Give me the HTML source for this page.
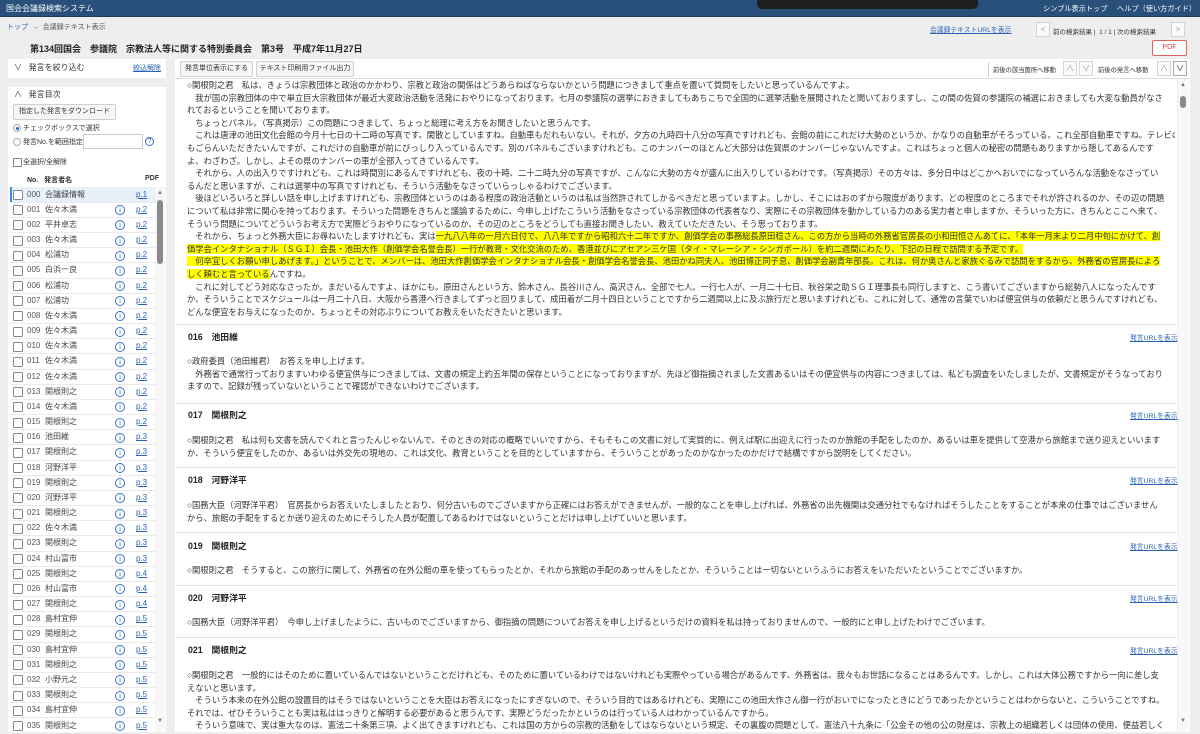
<!DOCTYPE html>
<html><head><meta charset="utf-8">
<style>
*{margin:0;padding:0;box-sizing:border-box}
body{width:1200px;height:732px;overflow:hidden;background:#eeeeee;font-family:"Liberation Sans","Noto Sans CJK JP",sans-serif;color:#333;position:relative}
.a{position:absolute}
.hdr{left:0;top:0;width:1200px;height:17px;background:#28507a;border-bottom:1px solid #1b3a5c}
.w{color:#fff;font-size:8.5px;line-height:17px}
.lnk{color:#2a62b8;text-decoration:underline}
.btn{background:#f6f6f6;border:1px solid #cfcfcf;border-radius:2px;font-size:7px;line-height:14px;text-align:center;color:#333;white-space:nowrap;overflow:hidden}
.ln{position:absolute;left:187px;width:988px;white-space:nowrap;overflow:hidden;font-size:8.3px;line-height:12.6px;height:12.6px}
.hl{background:#ffff00}
.sep{position:absolute;left:176px;width:1000px;height:1px;background:#e2e2e2}
.sh{position:absolute;left:188px;font-size:8.8px;font-weight:bold;color:#222}
.su{position:absolute;left:1130px;font-size:6.8px;color:#2a62b8;text-decoration:underline}
.row{position:absolute;left:10px;width:145px;height:15.17px;border-bottom:1px solid #eaeaea;font-size:8px;line-height:14px}
.cb{position:absolute;left:3px;top:2.5px;width:10px;height:10px;border:1px solid #888;border-radius:1.5px;background:#fff}
.no{position:absolute;left:17px;color:#555}
.nm{position:absolute;left:35px;color:#444}
.ic{position:absolute;left:105px;top:2.5px;width:10px;height:10px;border:1px solid #3a6fc0;border-radius:50%;color:#3a6fc0;font-size:7.5px;line-height:8px;text-align:center;font-family:"Liberation Serif",serif}
.pg{position:absolute;left:126px;color:#2a62b8;text-decoration:underline}
.arw{width:14px;height:15px;border:1px solid #d5d5d5;background:#fafafa;font-size:8px;line-height:13px;text-align:center;color:#999}
</style></head><body>
<div class="a hdr"></div>
<div class="a w" style="left:6px;top:0;font-size:8px">国会会議録検索システム</div>
<div class="a" style="left:757px;top:0;width:221px;height:9px;background:#1e1e1e;border-radius:0 0 5px 5px"></div>
<div class="a w" style="left:1043px;top:0;font-size:7.2px">シンプル表示トップ</div>
<div class="a w" style="left:1117px;top:0;font-size:7.2px">ヘルプ（使い方ガイド）</div>

<div class="a" style="left:7px;top:22px;font-size:7px;color:#555"><span style="color:#2a62b8">トップ</span> &nbsp;→&nbsp; 会議録テキスト表示</div>
<div class="a" style="left:30px;top:42px;font-size:9px;font-weight:bold;color:#222">第134回国会　参議院　宗教法人等に関する特別委員会　第3号　平成7年11月27日</div>
<div class="a lnk" style="left:930px;top:24px;font-size:6.8px">会議録テキストURLを表示</div>
<div class="a arw" style="left:1036px;top:22px">&lt;</div>
<div class="a" style="left:1053px;top:26px;font-size:6.5px;color:#333;white-space:nowrap">前の検索結果 |&nbsp; 1 / 1 | 次の検索結果</div>
<div class="a arw" style="left:1171px;top:22px">&gt;</div>
<div class="a" style="left:1152px;top:40px;width:35px;height:16px;border:1px solid #e06060;border-radius:2px;background:#fff;color:#d04040;font-size:7px;line-height:14px;text-align:center">PDF</div>

<!-- left panel -->
<div class="a" style="left:8px;top:59px;width:158px;height:19px;background:#fff"></div>
<div class="a" style="left:14px;top:62px;font-size:8px;color:#333">∨ &nbsp;&nbsp;発言を絞り込む</div>
<div class="a lnk" style="left:133px;top:63px;font-size:7px">絞込解除</div>
<div class="a" style="left:8px;top:87px;width:158px;height:645px;background:#fff"></div>
<div class="a" style="left:14px;top:89px;font-size:8px;color:#333">∧ &nbsp;&nbsp;発言目次</div>
<div class="a btn" style="left:13px;top:104px;width:103px;height:16px">指定した発言をダウンロード</div>
<div class="a" style="left:13px;top:124px;width:8px;height:8px;border:1px solid #aaa;border-radius:50%"><div style="margin:1.5px;width:3px;height:3px;border-radius:50%;background:#1a5fc4"></div></div>
<div class="a" style="left:23px;top:123px;font-size:7px">チェックボックスで選択</div>
<div class="a" style="left:13px;top:138px;width:8px;height:8px;border:1px solid #aaa;border-radius:50%"></div>
<div class="a" style="left:23px;top:137px;font-size:7px">発言No.を範囲指定</div>
<div class="a" style="left:83px;top:134px;width:60px;height:15px;border:1px solid #ccc"></div>
<div class="a" style="left:145px;top:137px;width:9px;height:9px;border:1px solid #3a6fc0;border-radius:50%;color:#3a6fc0;font-size:7px;line-height:7px;text-align:center">?</div>
<div class="a" style="left:13px;top:158px;width:9px;height:9px;border:1px solid #888"></div>
<div class="a" style="left:23px;top:157px;font-size:7px">全選択/全解除</div>
<div class="a" style="left:27px;top:175px;font-size:7px;font-weight:bold;color:#333">No.&nbsp;&nbsp; 発言者名</div>
<div class="a" style="left:145px;top:175px;font-size:7px;font-weight:bold;color:#333">PDF</div>
<div class="a" style="left:10px;top:187px;width:145px;height:15px;background:#e8f1fa;border-left:2px solid #3a8ee0"></div>

<div class="row" style="top:187.5px"><div class="cb"></div><div class="no">000</div><div class="nm">会議録情報</div><div class="pg">p.1</div></div>
<div class="row" style="top:202.7px"><div class="cb"></div><div class="no">001</div><div class="nm">佐々木満</div><div class="ic">i</div><div class="pg">p.2</div></div>
<div class="row" style="top:217.8px"><div class="cb"></div><div class="no">002</div><div class="nm">平井卓志</div><div class="ic">i</div><div class="pg">p.2</div></div>
<div class="row" style="top:233.0px"><div class="cb"></div><div class="no">003</div><div class="nm">佐々木満</div><div class="ic">i</div><div class="pg">p.2</div></div>
<div class="row" style="top:248.2px"><div class="cb"></div><div class="no">004</div><div class="nm">松浦功</div><div class="ic">i</div><div class="pg">p.2</div></div>
<div class="row" style="top:263.4px"><div class="cb"></div><div class="no">005</div><div class="nm">白浜一良</div><div class="ic">i</div><div class="pg">p.2</div></div>
<div class="row" style="top:278.5px"><div class="cb"></div><div class="no">006</div><div class="nm">松浦功</div><div class="ic">i</div><div class="pg">p.2</div></div>
<div class="row" style="top:293.7px"><div class="cb"></div><div class="no">007</div><div class="nm">松浦功</div><div class="ic">i</div><div class="pg">p.2</div></div>
<div class="row" style="top:308.9px"><div class="cb"></div><div class="no">008</div><div class="nm">佐々木満</div><div class="ic">i</div><div class="pg">p.2</div></div>
<div class="row" style="top:324.0px"><div class="cb"></div><div class="no">009</div><div class="nm">佐々木満</div><div class="ic">i</div><div class="pg">p.2</div></div>
<div class="row" style="top:339.2px"><div class="cb"></div><div class="no">010</div><div class="nm">佐々木満</div><div class="ic">i</div><div class="pg">p.2</div></div>
<div class="row" style="top:354.4px"><div class="cb"></div><div class="no">011</div><div class="nm">佐々木満</div><div class="ic">i</div><div class="pg">p.2</div></div>
<div class="row" style="top:369.5px"><div class="cb"></div><div class="no">012</div><div class="nm">佐々木満</div><div class="ic">i</div><div class="pg">p.2</div></div>
<div class="row" style="top:384.7px"><div class="cb"></div><div class="no">013</div><div class="nm">関根則之</div><div class="ic">i</div><div class="pg">p.2</div></div>
<div class="row" style="top:399.9px"><div class="cb"></div><div class="no">014</div><div class="nm">佐々木満</div><div class="ic">i</div><div class="pg">p.2</div></div>
<div class="row" style="top:415.1px"><div class="cb"></div><div class="no">015</div><div class="nm">関根則之</div><div class="ic">i</div><div class="pg">p.2</div></div>
<div class="row" style="top:430.2px"><div class="cb"></div><div class="no">016</div><div class="nm">池田維</div><div class="ic">i</div><div class="pg">p.3</div></div>
<div class="row" style="top:445.4px"><div class="cb"></div><div class="no">017</div><div class="nm">関根則之</div><div class="ic">i</div><div class="pg">p.3</div></div>
<div class="row" style="top:460.6px"><div class="cb"></div><div class="no">018</div><div class="nm">河野洋平</div><div class="ic">i</div><div class="pg">p.3</div></div>
<div class="row" style="top:475.7px"><div class="cb"></div><div class="no">019</div><div class="nm">関根則之</div><div class="ic">i</div><div class="pg">p.3</div></div>
<div class="row" style="top:490.9px"><div class="cb"></div><div class="no">020</div><div class="nm">河野洋平</div><div class="ic">i</div><div class="pg">p.3</div></div>
<div class="row" style="top:506.1px"><div class="cb"></div><div class="no">021</div><div class="nm">関根則之</div><div class="ic">i</div><div class="pg">p.3</div></div>
<div class="row" style="top:521.2px"><div class="cb"></div><div class="no">022</div><div class="nm">佐々木満</div><div class="ic">i</div><div class="pg">p.3</div></div>
<div class="row" style="top:536.4px"><div class="cb"></div><div class="no">023</div><div class="nm">関根則之</div><div class="ic">i</div><div class="pg">p.3</div></div>
<div class="row" style="top:551.6px"><div class="cb"></div><div class="no">024</div><div class="nm">村山富市</div><div class="ic">i</div><div class="pg">p.3</div></div>
<div class="row" style="top:566.8px"><div class="cb"></div><div class="no">025</div><div class="nm">関根則之</div><div class="ic">i</div><div class="pg">p.4</div></div>
<div class="row" style="top:581.9px"><div class="cb"></div><div class="no">026</div><div class="nm">村山富市</div><div class="ic">i</div><div class="pg">p.4</div></div>
<div class="row" style="top:597.1px"><div class="cb"></div><div class="no">027</div><div class="nm">関根則之</div><div class="ic">i</div><div class="pg">p.4</div></div>
<div class="row" style="top:612.3px"><div class="cb"></div><div class="no">028</div><div class="nm">島村宜伸</div><div class="ic">i</div><div class="pg">p.5</div></div>
<div class="row" style="top:627.4px"><div class="cb"></div><div class="no">029</div><div class="nm">関根則之</div><div class="ic">i</div><div class="pg">p.5</div></div>
<div class="row" style="top:642.6px"><div class="cb"></div><div class="no">030</div><div class="nm">島村宜伸</div><div class="ic">i</div><div class="pg">p.5</div></div>
<div class="row" style="top:657.8px"><div class="cb"></div><div class="no">031</div><div class="nm">関根則之</div><div class="ic">i</div><div class="pg">p.5</div></div>
<div class="row" style="top:672.9px"><div class="cb"></div><div class="no">032</div><div class="nm">小野元之</div><div class="ic">i</div><div class="pg">p.5</div></div>
<div class="row" style="top:688.1px"><div class="cb"></div><div class="no">033</div><div class="nm">関根則之</div><div class="ic">i</div><div class="pg">p.5</div></div>
<div class="row" style="top:703.3px"><div class="cb"></div><div class="no">034</div><div class="nm">島村宜伸</div><div class="ic">i</div><div class="pg">p.5</div></div>
<div class="row" style="top:718.5px"><div class="cb"></div><div class="no">035</div><div class="nm">関根則之</div><div class="ic">i</div><div class="pg">p.5</div></div>
<div class="a" style="left:155px;top:187px;width:10px;height:545px;background:#f7f7f7"></div>
<div class="a" style="left:157px;top:190px;font-size:6px;color:#777">▲</div>
<div class="a" style="left:157px;top:200px;width:6px;height:64px;background:#8a8a8a;border-radius:3px"></div>
<div class="a" style="left:157px;top:718px;font-size:6px;color:#777">▼</div>

<!-- main panel -->
<div class="a" style="left:175px;top:59px;width:1015px;height:673px;background:#fff"></div>
<div class="a" style="left:175px;top:78px;width:1015px;height:1px;background:#ddd"></div>
<div class="a btn" style="left:180px;top:61px;width:73px;height:16px">発言単位表示にする</div>
<div class="a btn" style="left:256px;top:61px;width:98px;height:16px">テキスト印刷用ファイル出力</div>
<div class="a" style="left:988px;top:62px;width:1px;height:15px;background:#ccc"></div>
<div class="a" style="left:993px;top:65px;font-size:6.3px;white-space:nowrap">前後の該当箇所へ移動</div>
<div class="a arw" style="left:1063px;top:61px">∧</div>
<div class="a arw" style="left:1079px;top:61px">∨</div>
<div class="a" style="left:1098px;top:65px;font-size:6.3px;white-space:nowrap">前後の発言へ移動</div>
<div class="a arw" style="left:1157px;top:61px">∧</div>
<div class="a arw" style="left:1173px;top:61px;color:#333;border-color:#aaa">∨</div>
<div class="a" style="left:1177px;top:79px;width:12px;height:653px;background:#f8f8f8;border-left:1px solid #eee"></div>
<div class="a" style="left:1180px;top:82px;font-size:6px;color:#777">▲</div>
<div class="a" style="left:1180px;top:96px;width:6px;height:12px;background:#8a8a8a;border-radius:3px"></div>
<div class="a" style="left:1180px;top:718px;font-size:6px;color:#777">▼</div>

<div class="ln" style="top:79px">○関根則之君　私は、きょうは宗教団体と政治のかかわり、宗教と政治の関係はどうあらねばならないかという問題につきまして重点を置いて質問をしたいと思っているんですよ。</div>
<div class="ln" style="top:91.6px">　我が国の宗教団体の中で単立巨大宗教団体が最近大変政治活動を活発におやりになっております。七月の参議院の選挙におきましてもあちこちで全国的に選挙活動を展開されたと聞いておりますし、この間の佐賀の参議院の補選におきましても大変な動員がなさ</div>
<div class="ln" style="top:104.2px">れておるということを聞いております。</div>
<div class="ln" style="top:116.8px">　ちょっとパネル。（写真掲示）この問題につきまして、ちょっと総理に考え方をお聞きしたいと思うんです。</div>
<div class="ln" style="top:129.4px">　これは唐津の池田文化会館の今月十七日の十二時の写真です。閑散としていますね。自動車もだれもいない。それが、夕方の九時四十八分の写真ですけれども、会館の前にこれだけ大勢のというか、かなりの自動車がそろっている。これ全部自動車ですね。テレビの方に</div>
<div class="ln" style="top:142px">もごらんいただきたいんですが、これだけの自動車が前にびっしり入っているんです。別のパネルもございますけれども、このナンバーのほとんど大部分は佐賀県のナンバーじゃないんですよ。これはちょっと個人の秘密の問題もありますから隠してあるんです</div>
<div class="ln" style="top:154.6px">よ、わざわざ。しかし、よその県のナンバーの車が全部入ってきているんです。</div>
<div class="ln" style="top:167.2px">　それから、人の出入りですけれども、これは時間別にあるんですけれども、夜の十時、二十二時九分の写真ですが、こんなに大勢の方々が盛んに出入りしているわけです。（写真掲示）その方々は、多分日中はどこかへおいでになっていろんな活動をなさってい</div>
<div class="ln" style="top:179.8px">るんだと思いますが、これは選挙中の写真ですけれども、そういう活動をなさっていらっしゃるわけでございます。</div>
<div class="ln" style="top:192.4px">　後ほどいろいろと詳しい話を申し上げますけれども、宗教団体というのはある程度の政治活動というのは私は当然許されてしかるべきだと思っていますよ。しかし、そこにはおのずから限度があります。どの程度のところまでそれが許されるのか、その辺の問題</div>
<div class="ln" style="top:205px">について私は非常に関心を持っております。そういった問題をきちんと議論するために、今申し上げたこういう活動をなさっている宗教団体の代表者なり、実際にその宗教団体を動かしている力のある実力者と申しますか、そういった方に、きちんとここへ来て、</div>
<div class="ln" style="top:217.6px">そういう問題についてどういうお考え方で実際どうおやりになっているのか、その辺のところをどうしても直接お聞きしたい、教えていただきたい、そう思っております。</div>
<div class="ln" style="top:230.2px">　それから、ちょっと外務大臣にお尋ねいたしますけれども、実は<span class="hl">一九八八年の一月六日付で、八八年ですから昭和六十二年ですか、創価学会の事務総長原田稔さん、この方から当時の外務省官房長の小和田恒さんあてに、「本年一月末より二月中旬にかけて、創</span></div>
<div class="ln" style="top:242.8px"><span class="hl">価学会インタナショナル（ＳＧＩ）会長・池田大作（創価学会名誉会長）一行が教育・文化交流のため、香港並びにアセアン三ケ国（タイ・マレーシア・シンガポール）を約二週間にわたり、下記の日程で訪問する予定です。</span></div>
<div class="ln" style="top:255.4px"><span class="hl">　何卒宜しくお願い申しあげます。」ということで、メンバーは、池田大作創価学会インタナショナル会長・創価学会名誉会長、池田かね同夫人、池田博正同子息、創価学会副青年部長。これは、何か奥さんと家族ぐるみで訪問をするから、外務省の官房長によろ</span></div>
<div class="ln" style="top:268px"><span class="hl">しく頼むと言っている</span>んですね。</div>
<div class="ln" style="top:280.6px">　これに対してどう対応なさったか。まだいるんですよ、ほかにも。原田さんという方、鈴木さん、長谷川さん、高沢さん。全部で七人。一行七人が、一月二十七日、秋谷栄之助ＳＧＩ理事長も同行しますと、こう書いてございますから総勢八人になったんです</div>
<div class="ln" style="top:293.2px">か、そういうことでスケジュールは一月二十八日、大阪から香港へ行きましてずっと回りまして、成田着が二月十四日ということですから二週間以上に及ぶ旅行だと思いますけれども、これに対して、通常の言葉でいわば便宜供与の依頼だと思うんですけれども、</div>
<div class="ln" style="top:305.8px">どんな便宜をお与えになったのか、ちょっとその対応ぶりについてお教えをいただきたいと思います。</div>

<div class="sep" style="top:324px"></div>
<div class="sh" style="top:330px">016　池田維</div><div class="su" style="top:332px">発言URLを表示</div>
<div class="ln" style="top:355px">○政府委員（池田維君）　お答えを申し上げます。</div>
<div class="ln" style="top:367.6px">　外務省で通常行っておりますいわゆる便宜供与につきましては、文書の規定上約五年間の保存ということになっておりますが、先ほど御指摘されました文書あるいはその便宜供与の内容につきましては、私ども調査をいたしましたが、文書規定がそうなっており</div>
<div class="ln" style="top:380.2px">ますので、記録が残っていないということで確認ができないわけでございます。</div>

<div class="sep" style="top:403px"></div>
<div class="sh" style="top:408px">017　関根則之</div><div class="su" style="top:410px">発言URLを表示</div>
<div class="ln" style="top:434px">○関根則之君　私は何も文書を読んでくれと言ったんじゃないんで、そのときの対応の概略でいいですから、そもそもこの文書に対して実質的に、例えば駅に出迎えに行ったのか旅館の手配をしたのか、あるいは車を提供して空港から旅館まで送り迎えといいます</div>
<div class="ln" style="top:446.6px">か、そういう便宜をしたのか、あるいは外交先の現地の、これは文化、教育ということを目的としていますから、そういうことがあったのかなかったのかだけで結構ですから説明をしてください。</div>

<div class="sep" style="top:467px"></div>
<div class="sh" style="top:473px">018　河野洋平</div><div class="su" style="top:475px">発言URLを表示</div>
<div class="ln" style="top:499px">○国務大臣（河野洋平君）　官房長からお答えいたしましたとおり、何分古いものでございますから正確にはお答えができませんが、一般的なことを申し上げれば、外務省の出先機関は交通分社でもなければそうしたことをすることが本来の仕事ではございません</div>
<div class="ln" style="top:511.6px">から、旅館の手配をするとか送り迎えのためにそうした人員が配置してあるわけではないということだけは申し上げていいと思います。</div>

<div class="sep" style="top:532px"></div>
<div class="sh" style="top:539px">019　関根則之</div><div class="su" style="top:541px">発言URLを表示</div>
<div class="ln" style="top:564px">○関根則之君　そうすると、この旅行に関して、外務省の在外公館の車を使ってもらったとか、それから旅館の手配のあっせんをしたとか、そういうことは一切ないというふうにお答えをいただいたということでございますか。</div>

<div class="sep" style="top:585px"></div>
<div class="sh" style="top:591px">020　河野洋平</div><div class="su" style="top:593px">発言URLを表示</div>
<div class="ln" style="top:616px">○国務大臣（河野洋平君）　今申し上げましたように、古いものでございますから、御指摘の問題についてお答えを申し上げるというだけの資料を私は持っておりませんので、一般的にと申し上げたわけでございます。</div>

<div class="sep" style="top:637px"></div>
<div class="sh" style="top:643px">021　関根則之</div><div class="su" style="top:645px">発言URLを表示</div>
<div class="ln" style="top:669px">○関根則之君　一般的にはそのために置いているんではないということだけれども、そのために置いているわけではないけれども実際やっている場合があるんです、外務省は。我々もお世話になることはあるんです。しかし、これは大体公務ですから一向に差し支</div>
<div class="ln" style="top:681.6px">えないと思います。</div>
<div class="ln" style="top:694.2px">　そういう本来の在外公館の設置目的はそうではないということを大臣はお答えになったにすぎないので、そういう目的ではあるけれども、実際にこの池田大作さん御一行がおいでになったときにどうであったかということはわからないと、こういうことですね。</div>
<div class="ln" style="top:706.8px">それでは、ぜひそういうことも実は私ははっきりと解明する必要があると思うんです、実際どうだったかというのは行っている人はわかっているんですから。</div>
<div class="ln" style="top:719.4px">　そういう意味で、実は重大なのは、憲法二十条第三項、よく出てきますけれども、これは国の方からの宗教的活動をしてはならないという規定、その裏腹の問題として、憲法八十九条に「公金その他の公の財産は、宗教上の組織若しくは団体の使用、便益若しく</div>
</body></html>
